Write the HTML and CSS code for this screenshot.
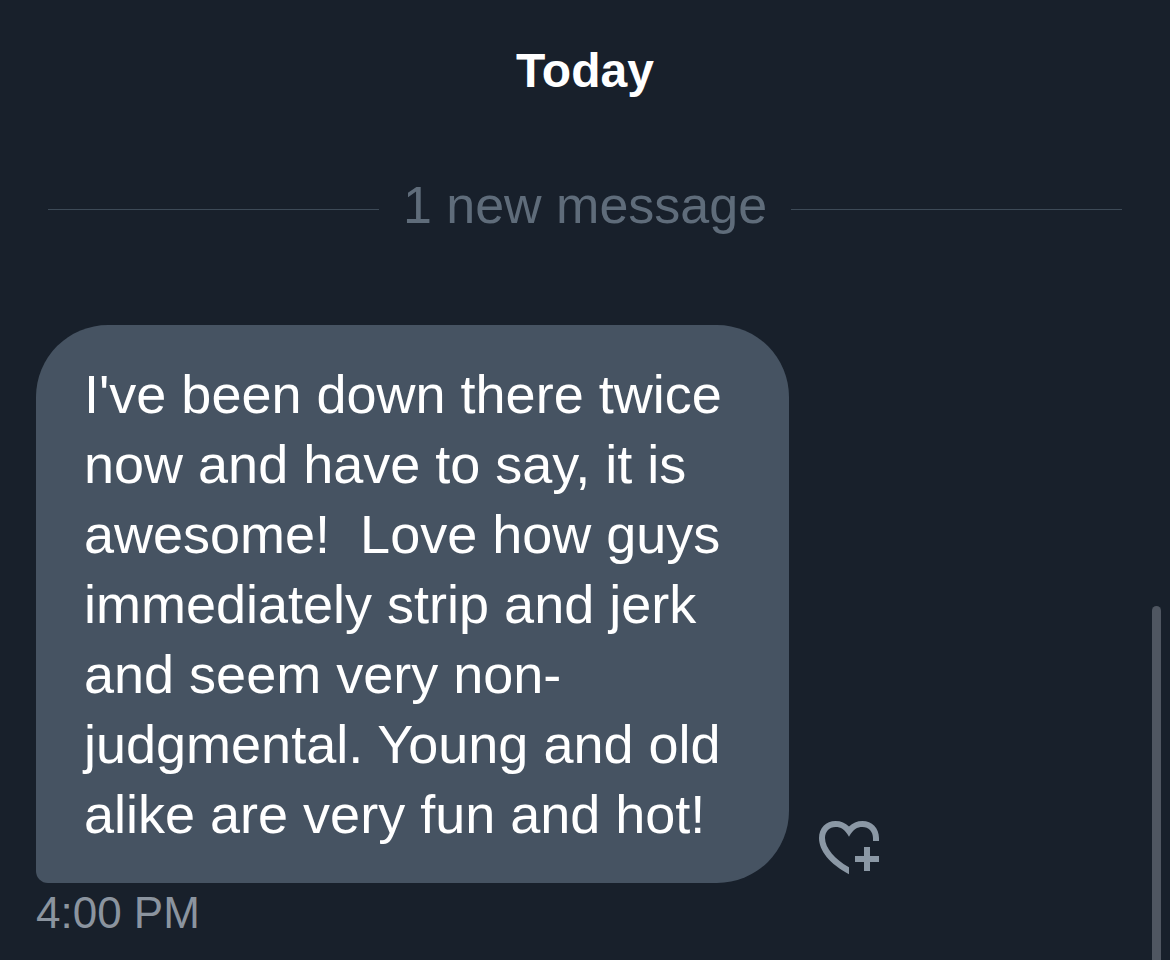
FILE: index.html
```html
<!DOCTYPE html>
<html lang="en">
<head>
<meta charset="utf-8">
<meta name="viewport" content="width=device-width, initial-scale=1">
<title>Messages</title>
<link rel="stylesheet" href="styles.css">
</head>
<body>
<main class="conversation">
  <h1 class="day">Today</h1>
  <div class="divider" role="separator"><span class="divider-label">1 new message</span></div>
  <article class="message">
    <div class="message-row">
      <p class="bubble">I've been down there twice now and have to say, it is awesome!  Love how guys immediately strip and jerk and seem very non-judgmental. Young and old alike are very fun and hot!</p>
      <button class="react" type="button" aria-label="Add reaction">
        <svg class="react-icon" viewBox="19 20 60 55" aria-hidden="true">
          <path d="M49 26.600C52.500 23 57 21 62.500 21C72 21 79 28 79 38V41H73V38C73 31.500 68.500 27 62.500 27C57 27 53.500 29 49 36.700C44.500 29 41 27 35.500 27C29.500 27 25 31.500 25 38C25 48 35 59.500 49 67.200V74.200C30 64 19 51 19 38C19 28 26 21 35.500 21C41 21 45.500 23 49 26.600Z"/>
          <path d="M64 47h6v9h9v6h-9v9h-6v-9h-9v-6h9z"/>
        </svg>
      </button>
    </div>
    <time class="time" datetime="16:00">4:00 PM</time>
  </article>
</main>
<div class="scrollbar" aria-hidden="true"></div>
</body>
</html>
```
FILE: styles.css
```css
* { box-sizing: border-box; }
body {
  margin: 0;
  min-height: 100vh;
  overflow: hidden;
  background: #18202b;
  color: #fff;
  font-family: "Liberation Sans", Arial, sans-serif;
}
.conversation { padding: 36px 48px 0 36px; }
.day {
  margin: 0 0 0 12px;
  font-size: 48px;
  line-height: 70px;
  font-weight: 700;
  text-align: center;
}
.divider {
  display: flex;
  align-items: center;
  gap: 24px;
  margin: 64px 0 0 12px;
  color: #5f6c7a;
  font-size: 52px;
  line-height: 70px;
}
.divider::before, .divider::after {
  content: "";
  flex: 1;
  height: 1px;
  margin-top: 8px;
  background: #3d4a57;
}
.message { margin-top: 85px; }
.message-row { display: flex; align-items: flex-end; gap: 30px; }
.bubble {
  margin: 0;
  max-width: 753px;
  padding: 34px 48px;
  border-radius: 72px 72px 72px 12px;
  background: #465362;
  font-size: 54px;
  line-height: 70px;
  white-space: pre-wrap;
}
.react {
  display: flex;
  flex: none;
  margin: 0 0 8px;
  padding: 0;
  border: 0;
  background: none;
  color: #8b98a5;
}
.react-icon { width: 60px; height: 55px; fill: currentColor; }
.time {
  display: block;
  margin-top: 4px;
  color: #8b949f;
  font-size: 44px;
  line-height: 52px;
}
.scrollbar {
  position: fixed;
  top: 606px;
  right: 9px;
  bottom: 0;
  width: 9px;
  border-radius: 5px 5px 0 0;
  background: #4f5661;
}
```
